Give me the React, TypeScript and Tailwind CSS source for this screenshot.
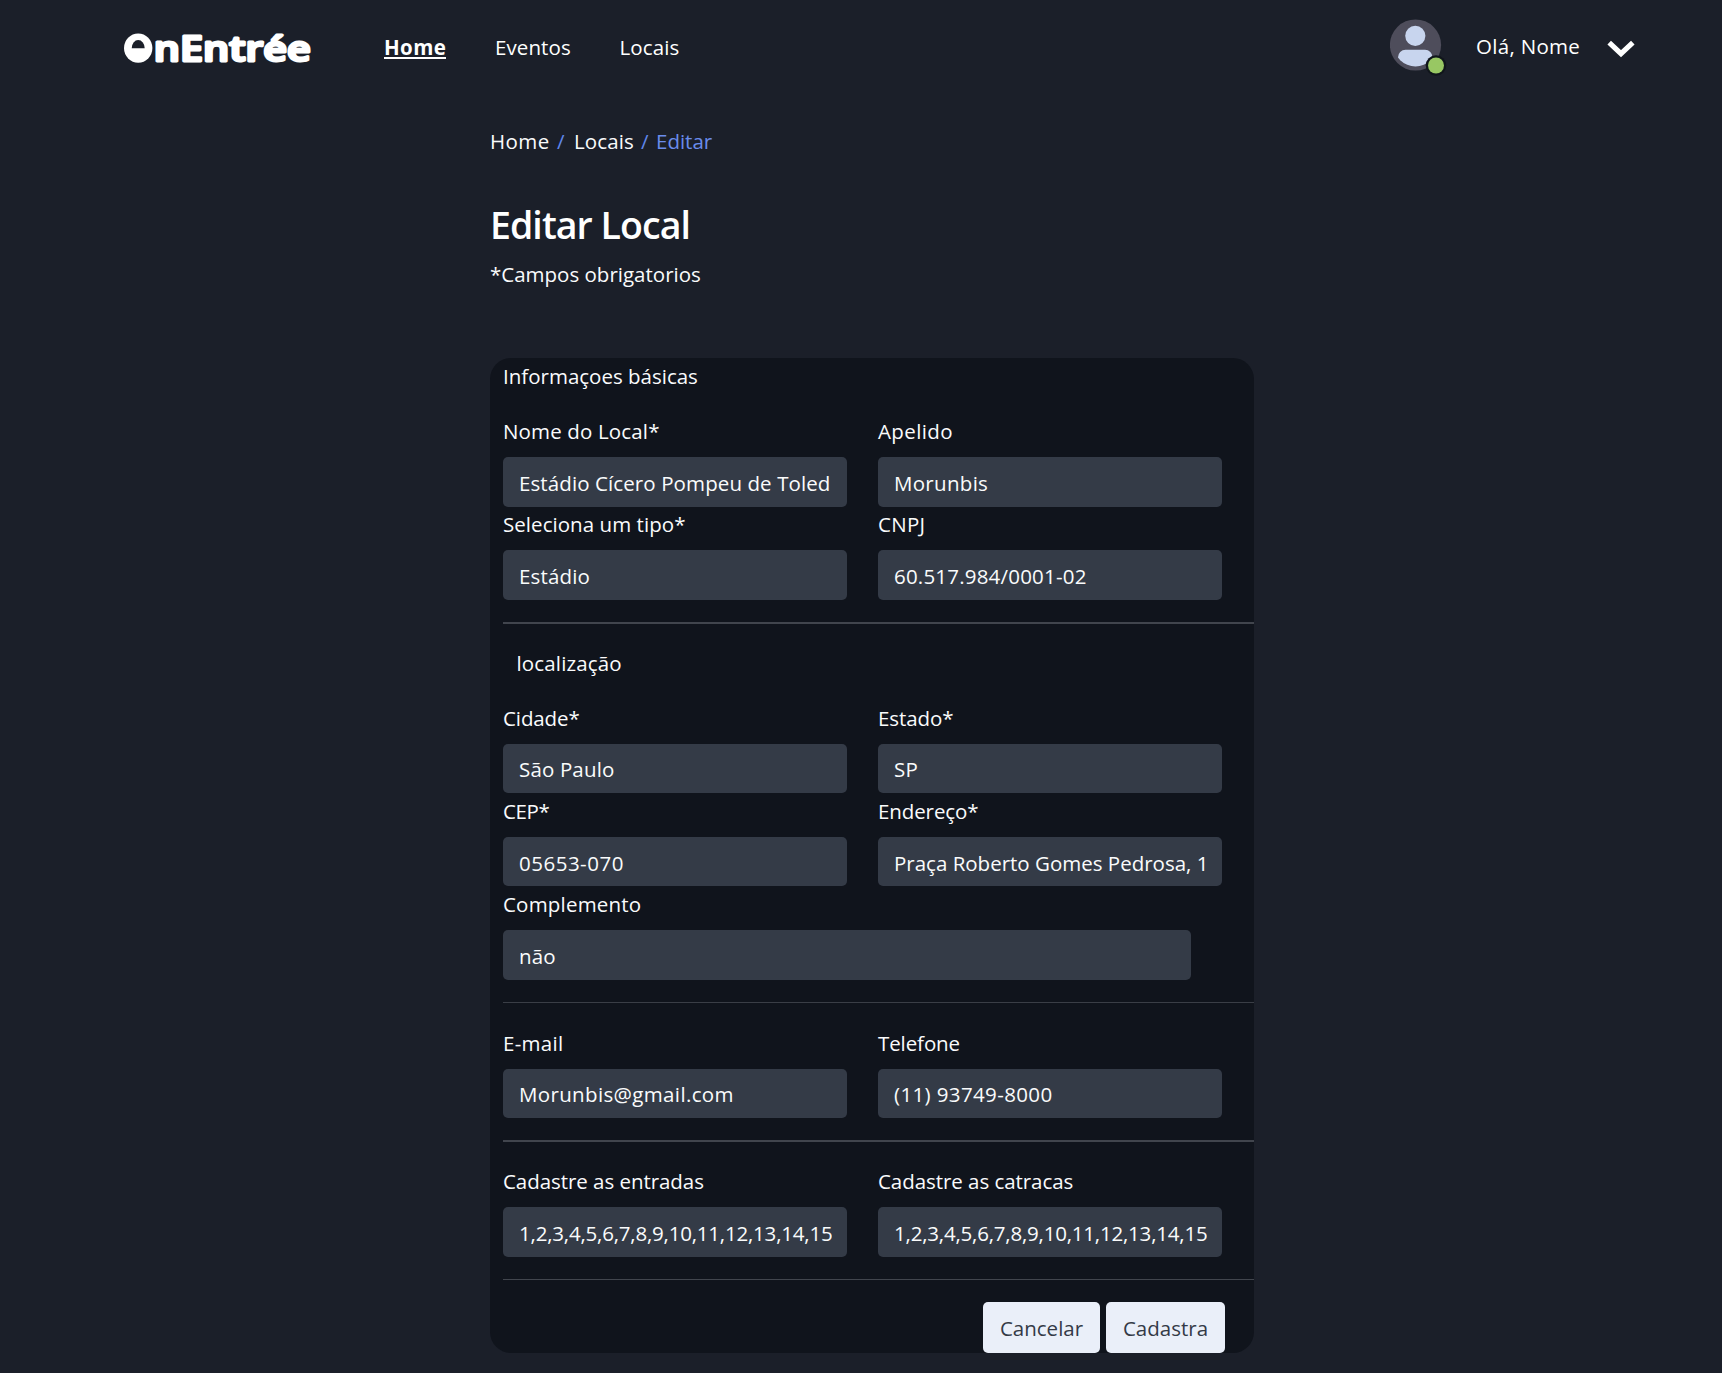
import React from 'react';

type FieldProps = {
  label: string;
  value: string;
  labelSpacing?: string;
  valueSpacing?: string;
  width?: string;
};

function Field({
  label,
  value,
  labelSpacing = 'tracking-[0.05px]',
  valueSpacing = 'tracking-[0.15px]',
  width = 'w-[344px]',
}: FieldProps) {
  return (
    <label className={`block h-[93.3px] ${width}`}>
      <span className={`block h-7 leading-7 whitespace-nowrap ${labelSpacing}`}>{label}</span>
      <input
        type="text"
        defaultValue={value}
        className={`mt-3 block h-[49.5px] w-full rounded-[5px] bg-[#343b47] pt-[2px] pr-[15px] pl-4 text-[#fafbfc] outline-none ${valueSpacing}`}
      />
    </label>
  );
}

function Row({ children }: { children: React.ReactNode }) {
  return <div className="flex gap-[31px]">{children}</div>;
}

function Logo() {
  return (
    <svg width="210" height="60" viewBox="0 0 210 60" className="block" aria-label="OnEntrée">
      <text
        x="39.8"
        y="44.7"
        fill="#fff"
        stroke="#fff"
        strokeWidth="2.8"
        strokeLinejoin="round"
        fontFamily="Open Sans, sans-serif"
        fontSize="35"
        fontWeight="600"
        textLength="157"
        lengthAdjust="spacingAndGlyphs"
      >
        nEntrée
      </text>
      <ellipse cx="24.2" cy="32.1" rx="14.2" ry="14.6" fill="#fff" />
      <path d="M17.7 32.2a6.5 8.2 0 0 1 13 0z" fill="#1b1f29" />
    </svg>
  );
}

function Avatar() {
  return (
    <svg width="58" height="60" viewBox="0 0 58 60" className="block">
      <defs>
        <clipPath id="avatar-body">
          <circle cx="25.5" cy="26" r="21.5" />
        </clipPath>
      </defs>
      <circle cx="25.5" cy="26" r="25.6" fill="#4e4d5b" />
      <circle cx="25.3" cy="16.8" r="10.1" fill="#c8d5ee" />
      <rect x="8" y="30.8" width="34.5" height="24" rx="7.5" fill="#c8d5ee" clipPath="url(#avatar-body)" />
      <circle cx="46" cy="46.5" r="10.3" fill="#10151b" />
      <circle cx="46" cy="46.5" r="8" fill="#98c763" />
    </svg>
  );
}

export default function App() {
  return (
    <div className="h-[1373px] w-full overflow-hidden bg-[#1b1f29] font-['Open_Sans','Noto_Sans',sans-serif] text-[20.5px] leading-7 text-[#fafbfc]">
      <header className="flex h-[94px]">
        <div className="ml-[114px] w-[270px] pt-4">
          <Logo />
        </div>
        <nav className="flex pt-[33px] text-white">
          <a className="block w-[111px]">
            <span className="inline-block h-[26px] border-b-2 border-white font-bold tracking-[0.4px]">Home</span>
          </a>
          <a className="block w-[124.5px] tracking-[0.1px]">Eventos</a>
          <a className="block tracking-[0.1px]">Locais</a>
        </nav>
        <div className="mr-[87px] ml-auto flex">
          <div className="pt-[19px]">
            <Avatar />
          </div>
          <span className="ml-7 w-[131px] pt-8 tracking-[0.3px] text-white">Olá, Nome</span>
          <svg width="28" height="18" viewBox="0 0 28 18" className="mt-10 block">
            <path d="M2.2 2.6 14 13.6 25.8 2.6" fill="none" stroke="#fff" strokeWidth="5.2" />
          </svg>
        </div>
      </header>

      <main className="ml-[490px] w-[764px] pt-[33px]">
        <div className="flex h-7 whitespace-pre">
          <a className="w-[67px] tracking-[0.4px]">Home</a>
          <span className="w-[17px] text-[#5f86ea]">/</span>
          <a className="w-[67px] tracking-[0.1px]">Locais</a>
          <span className="w-[15px] text-[#5f86ea]">/</span>
          <span className="text-[#6a8cec]">Editar</span>
        </div>
        <h1 className="mt-[46px] h-12 text-[37.5px] leading-[48px] font-semibold tracking-[-0.95px] text-white">
          Editar Local
        </h1>
        <p className="mt-[11px] h-7">*Campos obrigatorios</p>

        <form className="mt-[70px] h-[995px] rounded-[21px] bg-[#10141c] pt-1 pl-[13px]">
          <h2 className="mb-[27px] h-7">Informaçoes básicas</h2>
          <Row>
            <Field label="Nome do Local*" value="Estádio Cícero Pompeu de Toled" labelSpacing="tracking-[0.15px]" valueSpacing="tracking-[0.1px]" />
            <Field label="Apelido" value="Morunbis" labelSpacing="tracking-[0.4px]" valueSpacing="tracking-[0.3px]" />
          </Row>
          <Row>
            <Field label="Seleciona um tipo*" value="Estádio" />
            <Field label="CNPJ" value="60.517.984/0001-02" labelSpacing="tracking-[0.3px]" valueSpacing="tracking-[0.2px]" />
          </Row>
          <div className="mt-[18px] h-0.5 bg-[#41454d]" />

          <h2 className="mt-[25px] mb-[27px] h-7 pl-[13.5px] tracking-[0.15px]">localização</h2>
          <Row>
            <Field label="Cidade*" value="São Paulo" labelSpacing="tracking-[-0.1px]" />
            <Field label="Estado*" value="SP" labelSpacing="tracking-[-0.1px]" />
          </Row>
          <Row>
            <Field label="CEP*" value="05653-070" labelSpacing="tracking-[-0.4px]" valueSpacing="tracking-[0.5px]" />
            <Field label="Endereço*" value="Praça Roberto Gomes Pedrosa, 1" labelSpacing="tracking-[-0.1px]" valueSpacing="tracking-[0px]" />
          </Row>
          <Field label="Complemento" value="não" width="w-[688px]" labelSpacing="tracking-[0.2px]" />
          <div className="mt-[18.5px] h-px bg-[#3a3e46]" />

          <div className="mt-[25.7px]">
            <Row>
              <Field label="E-mail" value="Morunbis@gmail.com" valueSpacing="tracking-[0.35px]" labelSpacing="tracking-[0.3px]" />
              <Field label="Telefone" value="(11) 93749-8000" labelSpacing="tracking-[-0.1px]" valueSpacing="tracking-[0.37px]" />
            </Row>
          </div>
          <div className="mt-[18.3px] h-0.5 bg-[#41454d]" />

          <div className="mt-[25.2px]">
            <Row>
              <Field label="Cadastre as entradas" value="1,2,3,4,5,6,7,8,9,10,11,12,13,14,15" labelSpacing="tracking-[-0.05px]" valueSpacing="tracking-[-0.2px]" />
              <Field label="Cadastre as catracas" value="1,2,3,4,5,6,7,8,9,10,11,12,13,14,15" labelSpacing="tracking-[-0.05px]" valueSpacing="tracking-[-0.2px]" />
            </Row>
          </div>
          <div className="mt-[18px] h-px bg-[#41454d]" />

          <div className="mt-[22.3px] mr-[29px] flex justify-end gap-1.5 text-[#343a47]">
            <button type="button" className="h-[51px] w-[117px] rounded-[5px] bg-[#eaeff9]">
              Cancelar
            </button>
            <button type="button" className="h-[51px] w-[119px] rounded-[5px] bg-[#eaeff9]">
              Cadastra
            </button>
          </div>
        </form>
      </main>
    </div>
  );
}
